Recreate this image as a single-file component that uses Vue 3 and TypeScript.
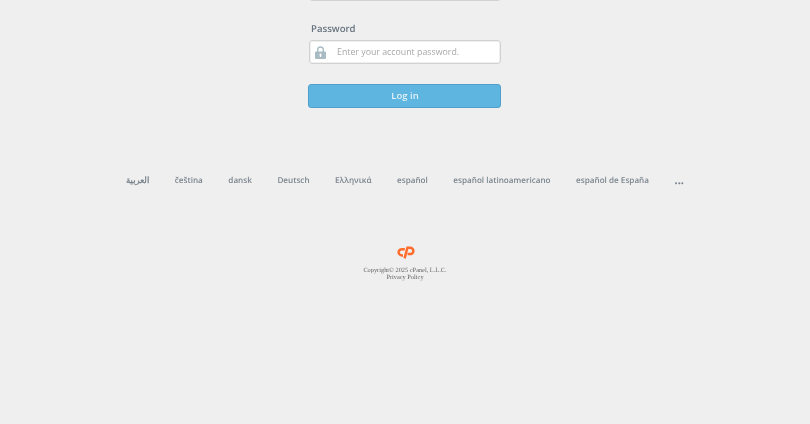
<script setup lang="ts">
const locales: string[] = [
  'čeština',
  'dansk',
  'Deutsch',
  'Ελληνικά',
  'español',
  'español latinoamericano',
  'español de España'
]
</script>

<template>
  <div class="page">
    <form class="login" @submit.prevent>
      <div class="input-box username"></div>
      <label class="field-label">Password</label>
      <div class="input-box">
        <svg class="lock" width="11" height="13" viewBox="0 0 11 13">
          <path d="M2 6V3.800a3.500 3.500 0 0 1 7 0V6H7.600V3.800a2.100 2.100 0 0 0-4.200 0V6z" fill="#a9bcc4" />
          <path fill-rule="evenodd" d="M1 5.500h9a1 1 0 0 1 1 1V12a1 1 0 0 1-1 1H1a1 1 0 0 1-1-1V6.500a1 1 0 0 1 1-1zM5.500 7.600a1.100 1.100 0 0 0-.6 2V11h1.200V9.600a1.100 1.100 0 0 0-.6-2z" fill="#a9bcc4" />
        </svg>
        <input type="password" placeholder="Enter your account password." />
      </div>
      <button type="submit">Log in</button>
    </form>

    <ul class="locales">
      <li class="arabic">العربية</li>
      <li v-for="name in locales" :key="name">{{ name }}</li>
      <li class="more">...</li>
    </ul>

    <footer>
      <svg class="logo" width="18" height="13" viewBox="0 0 18 13" fill="none" stroke="#ff6c2c" stroke-width="2.500">
        <path d="M7.800 3.200H5C3.300 3.200 1.600 4.500 1.600 6.200S3.300 9.400 5 9.400H6" />
        <path d="M7.600 12.400L10.400 1.700H13C14.900 1.700 16.400 3.100 16.400 4.900C16.400 6.800 14.800 8.100 13 8.100H10.600" />
      </svg>
      <div class="copy">Copyright© 2025 cPanel, L.L.C.</div>
      <div class="copy">Privacy Policy</div>
    </footer>
  </div>
</template>

<style>
html,
body {
  margin: 0;
  background: #efefef;
}
</style>

<style scoped>
.page {
  height: 424px;
  overflow: hidden;
  font-family: "Open Sans", "Liberation Sans", sans-serif;
  text-rendering: geometricPrecision;
  filter: blur(0.35px);
}

.login {
  width: 194px;
  margin: -23px auto 0;
}

.input-box {
  display: flex;
  align-items: center;
  width: 192px;
  height: 24px;
  margin-left: 1px;
  box-sizing: border-box;
  background: #fff;
  border: 1px solid #d2d2d2;
  border-radius: 3px;
  box-shadow: inset 0 0 0 1px #efefef;
}

.input-box.username {
  margin-bottom: 20px;
}

.field-label {
  display: block;
  margin: 0 0 4px 3px;
  height: 15px;
  line-height: 15px;
  color: #67737e;
  font-size: 9.600px;
  font-weight: 600;
}

.lock {
  margin-left: 5px;
  flex: none;
}

input {
  flex: 1;
  min-width: 0;
  margin-left: 11px;
  padding: 0;
  border: none;
  outline: none;
  background: transparent;
  font-family: inherit;
  font-size: 8.800px;
}

input::placeholder {
  color: #a8a8a8;
  opacity: 1;
}

button {
  display: block;
  width: 193px;
  height: 24px;
  margin-top: 20px;
  padding: 0 0 1px 1px;
  background: #5db5e0;
  border: 1px solid #4f9fc9;
  border-radius: 3px;
  color: #e4f2f9;
  font-family: inherit;
  font-size: 9.500px;
  font-weight: 600;
}

.locales {
  display: flex;
  justify-content: center;
  align-items: center;
  gap: 25.5px;
  margin: 65px 0 0;
  padding: 0;
  list-style: none;
  color: #7b858e;
  font-size: 8.150px;
  font-weight: 600;
  line-height: 15px;
}

.locales .arabic {
  font-size: 8.500px;
  margin-top: -1px;
}

.locales .more {
  font-size: 11px;
  font-weight: 700;
}

footer {
  display: flex;
  flex-direction: column;
  align-items: center;
  margin-top: 58px;
}

.logo {
  display: block;
  margin: 0 0 8px 1px;
}

.copy {
  font-family: "Liberation Serif", serif;
  font-size: 6.350px;
  line-height: 7px;
  color: #666;
}
</style>
